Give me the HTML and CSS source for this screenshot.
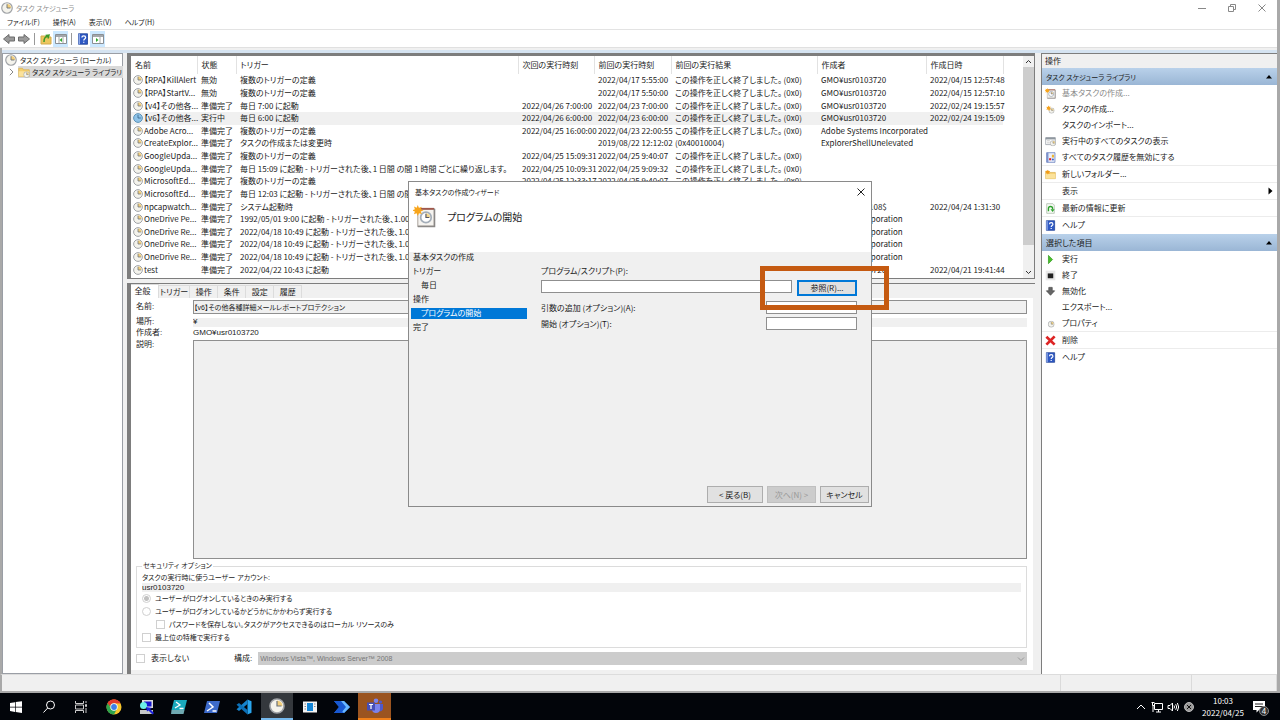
FILE: index.html
```html
<!DOCTYPE html>
<html lang="ja">

<head>
<meta charset="utf-8">
<meta name="viewport" content="width=device-width, initial-scale=1.0">
<title>タスク スケジューラ</title>
<link rel="stylesheet" href="styles.css">
</head>

<body>

<!-- shared icons -->
<svg class="sprite" aria-hidden="true">
  <symbol id="clock" viewBox="0 0 16 16">
    <circle cx="8" cy="8" r="7" fill="#f4f3ec" stroke="#9fa2a6" stroke-width="1.6"/>
    <path d="M8 8V2.500A5.500 5.500 0 0 1 13.500 8z" fill="#f3cf7c"/>
    <path d="M8 3v5h4.500" fill="none" stroke="#6a727b" stroke-width="1.200"/>
  </symbol>
  <symbol id="clock-run" viewBox="0 0 16 16">
    <circle cx="8" cy="8" r="7" fill="#8fc3e8" stroke="#5d93b8" stroke-width="1.600"/>
    <path d="M8 3v5h4.500" fill="none" stroke="#2f5c80" stroke-width="1.200"/>
  </symbol>
  <symbol id="help" viewBox="0 0 16 16">
    <path d="M2 1h12v14H2z" fill="#2f59c4" stroke="#173a8f"/>
    <path d="M2 1h2v14H2z" fill="#8ea9e8"/>
    <path d="M6.500 6c0-3 5-3 5 0 0 2-2.500 2-2.500 4M9 11.500v1.500" fill="none" stroke="#fff" stroke-width="1.700"/>
  </symbol>
  <symbol id="folder" viewBox="0 0 16 16">
    <path d="M1 3h5l1 2h8v9H1z" fill="#f5cf6c" stroke="#d9b052"/>
    <path d="M1 7h14v7H1z" fill="#fbe29b"/>
  </symbol>
  <symbol id="wizard" viewBox="0 0 24 24">
    <path d="M5 4h17v18H5z" fill="#f5f3ef" stroke="#b5aea8" stroke-width="1.200"/>
    <path d="M5 3h17v2H5z" fill="#a0584c"/>
    <path d="M22.500 4v18.500H5" fill="none" stroke="#8a8886" stroke-width="1.500"/>
    <circle cx="13.500" cy="13" r="5.500" fill="#fff" stroke="#a3adb8" stroke-width="1.800"/>
    <path d="M13.500 13V8.500A4.500 4.500 0 0 1 18 13z" fill="#f1d58d"/>
    <path d="M13.500 9v4h3.500" fill="none" stroke="#556" stroke-width="1.200"/>
    <path d="M5 0l1.200 3 3-1.300L8 4.500l3 1-3 1.200L9.300 9.500 6.200 8.500 5 11.500 3.800 8.500 1 9.700 2 6.700-1 5.500 2 4.500 1 1.600l2.800 1.200z" fill="#f8a51b"/>
  </symbol>
</svg>

<div class="window">

  <header class="titlebar">
    <svg class="ico12"><use href="#clock"/></svg>
    <h1>タスク スケジューラ</h1>
    <div class="winbtns">
      <button aria-label="最小化"><svg viewBox="0 0 8 8"><path d="M0 4.500h8"/></svg></button>
      <button aria-label="元に戻す"><svg viewBox="0 0 8 8"><path d="M.5 2.500h5v5h-5zM2.500 2.500v-2h5v5h-2"/></svg></button>
      <button aria-label="閉じる"><svg viewBox="0 0 8 8"><path d="M.5.5l7 7M7.500.5l-7 7"/></svg></button>
    </div>
  </header>

  <nav class="menubar">
    <button>ファイル(F)</button>
    <button>操作(A)</button>
    <button>表示(V)</button>
    <button>ヘルプ(H)</button>
  </nav>

  <div class="toolbar">
    <button aria-label="戻る"><svg class="ico12" viewBox="0 0 12 12"><path d="M.5 6L6 1.500V4h5.500v4H6v2.500z" fill="#9a9a9a" stroke="#6b6b6b"/></svg></button>
    <button aria-label="進む"><svg class="ico12" viewBox="0 0 12 12"><path d="M11.500 6L6 1.500V4H.5v4H6v2.500z" fill="#9a9a9a" stroke="#6b6b6b"/></svg></button>
    <span class="sep"></span>
    <button aria-label="上へ"><svg class="ico12" viewBox="0 0 12 12"><path d="M1 3h4l1 1h5v7H1z" fill="#edc75e" stroke="#d3ab4d"/><path d="M4 9c0-4 1-5 4-6M5.500 2.500L9 2.200 8 5.500" fill="none" stroke="#3c9a28" stroke-width="1.500"/></svg></button>
    <button class="on" aria-label="コンソール ツリー"><svg class="ico12" viewBox="0 0 12 12"><path d="M.5 1.500h11v9H.5z" fill="#fff" stroke="#8b8f94"/><path d="M1 2h10v2H1z" fill="#a3a8ad"/><path d="M4 4v6M8 4v6" stroke="#aaa"/><path d="M7 5v4L4.500 7z" fill="#2fa82f"/></svg></button>
    <span class="sep"></span>
    <button aria-label="ヘルプ"><svg class="ico12"><use href="#help"/></svg></button>
    <button class="on" aria-label="操作ウィンドウ"><svg class="ico12" viewBox="0 0 12 12"><path d="M.5 1.500h11v9H.5z" fill="#fff" stroke="#8b8f94"/><path d="M1 2h10v2H1z" fill="#a3a8ad"/><path d="M8 4v6" stroke="#aaa"/><path d="M4 5v4l2.500-2z" fill="#2fa82f"/></svg></button>
  </div>

  <main class="console">

    <aside class="tree">
      <div class="node root"><svg class="ico12"><use href="#clock"/></svg><span>タスク スケジューラ (ローカル)</span></div>
      <div class="node child">
        <svg class="chev" viewBox="0 0 5 8"><path d="M.8.8L4 4 .8 7.200" fill="none" stroke="#888"/></svg>
        <span class="picked"><svg class="ico12" viewBox="0 0 16 16"><use href="#folder"/><use href="#clock" x="7" y="7" width="9" height="9"/></svg>タスク スケジューラ ライブラリ</span>
      </div>
    </aside>

    <section class="center">

      <div class="list">
        <div class="tablewrap">
        <table class="tasks">
          <colgroup>
            <col class="c-name"><col class="c-state"><col class="c-trigger"><col class="c-next"><col class="c-prev"><col class="c-result"><col class="c-author"><col class="c-made">
          </colgroup>
          <thead>
            <tr><th>名前</th><th>状態</th><th>トリガー</th><th>次回の実行時刻</th><th>前回の実行時刻</th><th>前回の実行結果</th><th>作成者</th><th>作成日時</th></tr>
          </thead>
          <tbody>
            <tr><td><svg><use href="#clock"/></svg>【RPA】KillAlert</td><td>無効</td><td>複数のトリガーの定義</td><td></td><td>2022/04/17 5:55:00</td><td>この操作を正しく終了しました。 (0x0)</td><td>GMO¥usr0103720</td><td>2022/04/15 12:57:48</td></tr>
            <tr><td><svg><use href="#clock"/></svg>【RPA】StartV...</td><td>無効</td><td>複数のトリガーの定義</td><td></td><td>2022/04/17 5:50:00</td><td>この操作を正しく終了しました。 (0x0)</td><td>GMO¥usr0103720</td><td>2022/04/15 12:57:10</td></tr>
            <tr><td><svg><use href="#clock"/></svg>【v4】その他各...</td><td>準備完了</td><td>毎日 7:00 に起動</td><td>2022/04/26 7:00:00</td><td>2022/04/23 7:00:00</td><td>この操作を正しく終了しました。 (0x0)</td><td>GMO¥usr0103720</td><td>2022/02/24 19:15:57</td></tr>
            <tr class="selected"><td><svg><use href="#clock-run"/></svg>【v6】その他各...</td><td>実行中</td><td>毎日 6:00 に起動</td><td>2022/04/26 6:00:00</td><td>2022/04/23 6:00:00</td><td>この操作を正しく終了しました。 (0x0)</td><td>GMO¥usr0103720</td><td>2022/02/24 19:15:09</td></tr>
            <tr><td><svg><use href="#clock"/></svg>Adobe Acro...</td><td>準備完了</td><td>複数のトリガーの定義</td><td>2022/04/25 16:00:00</td><td>2022/04/23 22:00:55</td><td>この操作を正しく終了しました。 (0x0)</td><td>Adobe Systems Incorporated</td><td></td></tr>
            <tr><td><svg><use href="#clock"/></svg>CreateExplor...</td><td>準備完了</td><td>タスクの作成または変更時</td><td></td><td>2019/08/22 12:12:02</td><td>(0x40010004)</td><td>ExplorerShellUnelevated</td><td></td></tr>
            <tr><td><svg><use href="#clock"/></svg>GoogleUpda...</td><td>準備完了</td><td>複数のトリガーの定義</td><td>2022/04/25 15:09:31</td><td>2022/04/25 9:40:07</td><td>この操作を正しく終了しました。 (0x0)</td><td></td><td></td></tr>
            <tr><td><svg><use href="#clock"/></svg>GoogleUpda...</td><td>準備完了</td><td>毎日 15:09 に起動 - トリガーされた後、1 日間 の間 1 時間 ごとに繰り返します。</td><td>2022/04/25 10:09:31</td><td>2022/04/25 9:09:32</td><td>この操作を正しく終了しました。 (0x0)</td><td></td><td></td></tr>
            <tr><td><svg><use href="#clock"/></svg>MicrosoftEd...</td><td>準備完了</td><td>複数のトリガーの定義</td><td>2022/04/25 12:33:17</td><td>2022/04/25 9:40:07</td><td>この操作を正しく終了しました。 (0x0)</td><td></td><td></td></tr>
            <tr><td><svg><use href="#clock"/></svg>MicrosoftEd...</td><td>準備完了</td><td>毎日 12:03 に起動 - トリガーされた後、1 日間 の間 1</td><td></td><td></td><td></td><td></td><td></td></tr>
            <tr><td><svg><use href="#clock"/></svg>npcapwatch...</td><td>準備完了</td><td>システム起動時</td><td></td><td></td><td></td><td class="tail">108$</td><td>2022/04/24 1:31:30</td></tr>
            <tr><td><svg><use href="#clock"/></svg>OneDrive Pe...</td><td>準備完了</td><td>1992/05/01 9:00 に起動 - トリガーされた後、1.00:00:</td><td></td><td></td><td></td><td>Microsoft Corporation</td><td></td></tr>
            <tr><td><svg><use href="#clock"/></svg>OneDrive Re...</td><td>準備完了</td><td>2022/04/18 10:49 に起動 - トリガーされた後、1.00:00</td><td></td><td></td><td></td><td>Microsoft Corporation</td><td></td></tr>
            <tr><td><svg><use href="#clock"/></svg>OneDrive Re...</td><td>準備完了</td><td>2022/04/18 10:49 に起動 - トリガーされた後、1.00:00</td><td></td><td></td><td></td><td>Microsoft Corporation</td><td></td></tr>
            <tr><td><svg><use href="#clock"/></svg>OneDrive Re...</td><td>準備完了</td><td>2022/04/18 10:49 に起動 - トリガーされた後、1.00:00</td><td></td><td></td><td></td><td>Microsoft Corporation</td><td></td></tr>
            <tr><td><svg><use href="#clock"/></svg>test</td><td>準備完了</td><td>2022/04/22 10:43 に起動</td><td></td><td></td><td></td><td>GMO¥usr0103720</td><td>2022/04/21 19:41:44</td></tr>
          </tbody>
        </table>
        </div>
        <div class="scrollbar">
          <svg viewBox="0 0 11 11"><path d="M3 7l2.500-2.500L8 7"/></svg>
          <div class="thumb"></div>
          <svg viewBox="0 0 11 11"><path d="M3 4l2.500 2.500L8 4"/></svg>
        </div>
      </div>

      <div class="details">
        <div class="tabs" role="tablist">
          <button class="active" role="tab">全般</button><button role="tab">トリガー</button><button role="tab">操作</button><button role="tab">条件</button><button role="tab">設定</button><button role="tab">履歴</button>
        </div>
        <div class="panel">
          <div class="row r-name"><label for="name">名前:</label><input id="name" class="boxed" readonly value="【v6】その他各種詳細メールレポートプロテクション"></div>
          <div class="row r-place"><label for="place">場所:</label><input id="place" class="flat" readonly value="¥"></div>
          <div class="row r-author"><span>作成者:</span><span>GMO¥usr0103720</span></div>
          <div class="row r-desc"><label for="desc">説明:</label><textarea id="desc" class="boxed" readonly></textarea></div>
          <fieldset>
            <legend>セキュリティ オプション</legend>
            <label class="account" for="account">タスクの実行時に使うユーザー アカウント:</label>
            <input id="account" class="flat" readonly value="usr0103720">
            <label class="opt"><input type="radio" name="logon" checked disabled>ユーザーがログオンしているときのみ実行する</label>
            <label class="opt"><input type="radio" name="logon" disabled>ユーザーがログオンしているかどうかにかかわらず実行する</label>
            <label class="opt sub"><input type="checkbox" disabled>パスワードを保存しない。タスクがアクセスできるのはローカル リソースのみ</label>
            <label class="opt"><input type="checkbox" disabled>最上位の特権で実行する</label>
          </fieldset>
          <div class="bottom">
            <label class="opt"><input type="checkbox" disabled>表示しない</label>
            <label for="conf">構成:</label>
            <div class="select">
              <select id="conf" disabled><option>Windows Vista™, Windows Server™ 2008</option></select>
              <svg viewBox="0 0 8 8"><path d="M1 2.500l3 3 3-3"/></svg>
            </div>
          </div>
        </div>
      </div>

    </section>

    <aside class="actions">
      <h2>操作</h2>
      <h3>タスク スケジューラ ライブラリ<svg viewBox="0 0 8 5"><path d="M1 4.500h6L4 1z"/></svg></h3>
      <ul>
        <li><button disabled><svg><use href="#wizard"/></svg>基本タスクの作成...</button></li>
        <li><button><svg viewBox="0 0 16 16"><use href="#clock" x="5" y="5" width="9" height="9"/><path d="M5 2l1 2 2-.5L7.500 6 9 7.500 7 8 6 10 4.500 8 2 8.500 3 6 2 4l2 .2z" fill="#f5a21d"/></svg>タスクの作成...</button></li>
        <li><button><svg></svg>タスクのインポート...</button></li>
        <li><button><svg viewBox="0 0 16 16"><path d="M1 2.500h14v10H1z" fill="#fff" stroke="#8b929a"/><path d="M1 2h14v3H1z" fill="#8f979f"/><path d="M3 7h4M3 10h4" stroke="#aaa"/><use href="#clock" x="7" y="6" width="9" height="9"/></svg>実行中のすべてのタスクの表示</button></li>
        <li class="line"><button><svg viewBox="0 0 16 16"><path d="M2.500 1h12v14h-12z" fill="#e9eefb" stroke="#5670b5"/><path d="M2 1h3v14H2z" fill="#7d92cc"/><path d="M6 9h3v3H6z" fill="#d22"/><path d="M10 4h3v4h-3z" fill="#eeb52e"/><circle cx="11.500" cy="11" r="1.500" fill="#3b65c8"/></svg>すべてのタスク履歴を無効にする</button></li>
        <li class="line"><button><svg viewBox="0 0 16 16"><use href="#folder"/><path d="M4 1l1 2 2 0-1 2 1 2-2-.5L4 8 3 6 1 6l1-1.500L1 3h2z" fill="#f39b16"/></svg>新しいフォルダー...</button></li>
        <li class="line"><button><svg></svg>表示<svg class="more" viewBox="0 0 5 8"><path d="M.5.5v7L4.500 4z"/></svg></button></li>
        <li class="line"><button><svg viewBox="0 0 16 16"><path d="M2.500 1h9l2 2v12h-11z" fill="#f6faf4" stroke="#a4b3a2"/><path d="M5 12V8a3 3 0 0 1 6 0v1" fill="none" stroke="#2ea22e" stroke-width="2"/><path d="M8 9h6l-3 4z" fill="#2ea22e"/></svg>最新の情報に更新</button></li>
        <li><button><svg><use href="#help"/></svg>ヘルプ</button></li>
      </ul>
      <h3 class="second">選択した項目<svg viewBox="0 0 8 5"><path d="M1 4.500h6L4 1z"/></svg></h3>
      <ul>
        <li><button><svg viewBox="0 0 16 16"><path d="M5 2v12l6-6z" fill="#49bd2c" stroke="#2f9a1c"/></svg>実行</button></li>
        <li><button><svg viewBox="0 0 16 16"><path d="M1 1h14v14H1z" fill="#e9e9e9"/><path d="M4 5h8v7H4z" fill="#222"/></svg>終了</button></li>
        <li><button><svg viewBox="0 0 16 16"><path d="M5.500 2h5v5h3.500l-6 6.500L2 7h3.500z" fill="#666" stroke="#444"/></svg>無効化</button></li>
        <li><button><svg></svg>エクスポート...</button></li>
        <li class="line"><button><svg viewBox="0 0 16 16"><use href="#clock" x="4" y="4" width="10" height="10"/></svg>プロパティ</button></li>
        <li class="line"><button><svg viewBox="0 0 16 16"><path d="M2 2.500L14 14M14 2L2 14" stroke="#dd2525" stroke-width="4"/></svg>削除</button></li>
        <li><button><svg><use href="#help"/></svg>ヘルプ</button></li>
      </ul>
    </aside>

  </main>

  <footer class="statusbar"><span></span><span></span><span></span></footer>
</div>

<div class="dialog" role="dialog" aria-labelledby="dlgtitle">
  <div class="dlgtop">
    <div class="dlgbar">
      <span id="dlgtitle">基本タスクの作成ウィザード</span>
      <button aria-label="閉じる"><svg viewBox="0 0 8 8"><path d="M.5.5l7 7M7.500.5l-7 7"/></svg></button>
    </div>
    <div class="dlghead"><svg><use href="#wizard"/></svg><h2>プログラムの開始</h2></div>
  </div>
  <div class="dlgbody">
    <ol class="steps">
      <li>基本タスクの作成</li>
      <li>トリガー</li>
      <li class="in">毎日</li>
      <li>操作</li>
      <li class="in current">プログラムの開始</li>
      <li>完了</li>
    </ol>
    <div class="form">
      <label for="prog">プログラム/スクリプト(P):</label>
      <div class="pick"><input id="prog"><button class="btn default">参照(R)...</button></div>
      <div class="short"><label for="args">引数の追加 (オプション)(A):</label><input id="args"></div>
      <div class="short"><label for="start">開始 (オプション)(T):</label><input id="start"></div>
    </div>
  </div>
  <div class="dlgfoot">
    <button class="btn back">&lt; 戻る(B)</button>
    <button class="btn" disabled>次へ(N) &gt;</button>
    <button class="btn">キャンセル</button>
  </div>
</div>

<div class="marker"></div>

<div class="taskbar">
  <div class="apps">
    <button aria-label="スタート"><svg viewBox="0 0 16 16"><path d="M2 4l5-.8v4.500H2zM7.700 3.100L14 2.200v5.500H7.700zM2 8.400h5v4.500L2 12.100zM7.700 8.400H14V14l-6.300-.9z" fill="#fff"/></svg></button>
    <button aria-label="検索"><svg viewBox="0 0 16 16"><circle cx="9.500" cy="6" r="4" fill="none" stroke="#fff"/><path d="M6.700 9L2.500 13.500" stroke="#fff"/></svg></button>
    <button aria-label="タスク ビュー"><svg viewBox="0 0 16 16"><path d="M2.500 2v2.500h8V2M2.500 14v-2.500h8V14M2.500 6h8v4h-8zM13 2v2M13 9v5M12.500 5.500h1v2h-1z" fill="none" stroke="#ccc"/></svg></button>
    <button aria-label="Chrome"><svg viewBox="0 0 16 16"><circle cx="8" cy="8" r="7.500" fill="#f7c62c"/><path d="M8 8L1.500 4.200A7.500 7.500 0 0 1 14.500 4.200H8z" fill="#e33b2e"/><path d="M1.500 4.200A7.500 7.500 0 0 0 8 15.500L11 9.800 5 10z" fill="#2da44e"/><path d="M1.500 4.200L5 10 8 8 8 4z" fill="#2da44e"/><path d="M1.500 4.200A7.500 7.500 0 0 1 14.500 4.200H8A4 4 0 0 0 4.300 7.500z" fill="#e33b2e"/><circle cx="8" cy="8" r="3.700" fill="#fff"/><circle cx="8" cy="8" r="2.900" fill="#3f7de8"/></svg></button>
    <button aria-label="リモート"><svg viewBox="0 0 16 16"><path d="M3 1h11v8H3z" fill="#ddd"/><path d="M5 2.500h7.500v5H5z" fill="#1717cf"/><path d="M1 11h13v4H1z" fill="#c5c8c9"/><circle cx="4.500" cy="6.500" r="3.500" fill="#6cf0e8"/><path d="M7 8l6 1-2 1 4 4-1.500 1.500-4-4-1.500 1z" fill="#1d22dc"/></svg></button>
    <button aria-label="PowerShell ISE"><svg viewBox="0 0 16 16"><path d="M3 1h13l-2.500 10H.5z" fill="#19aabd"/><path d="M.5 11h13l-1 4H0z" fill="#6fa9b1"/><path d="M5 3l4 3-5 3M8.500 9.500h4" fill="none" stroke="#fff" stroke-width="1.300"/></svg></button>
    <button aria-label="PowerShell"><svg viewBox="0 0 16 16"><path d="M3 2h13l-3 12H0z" fill="#3d6bcb"/><path d="M5 4l4 4-6 4M8.500 12h4" fill="none" stroke="#fff" stroke-width="1.500"/></svg></button>
    <button aria-label="Visual Studio Code"><svg viewBox="0 0 16 16"><path d="M11.500.5L15.500 2.300v11.400L11.500 15.500z" fill="#29a5ee"/><path d="M11.500.5v4.500L3 12 .5 10.200z" fill="#1684cd"/><path d="M11.500 15.500V11L3 4 .5 5.800z" fill="#0b70b8"/></svg></button>
    <button class="open" aria-label="タスク スケジューラ"><svg><use href="#clock"/></svg></button>
    <button aria-label="アプリ"><svg viewBox="0 0 16 16"><path d="M1 2.500h14v11H1z" fill="#f3f3f3"/><path d="M5 4h6v8H5z" fill="#1485d6"/><path d="M2.500 5h1.500M2.500 7.500h1.500M2.500 10h1.500M12 5h1.500M12 7.500h1.500" stroke="#888"/></svg></button>
    <button aria-label="Power Automate"><svg viewBox="0 0 16 16"><path d="M0 2h10l6 6-6 6H0l5-6z" fill="#2266e3"/><path d="M10 2l6 6-6 6-3-3 3-3-5-6z" fill="#68b7ff"/><path d="M0 2h7l5 6-5 6H0l5-6z" fill="#1858d0"/></svg></button>
    <button class="alert" aria-label="Teams"><svg viewBox="0 0 16 16"><circle cx="9" cy="2.800" r="2.300" fill="#7b83eb"/><circle cx="13.500" cy="4" r="1.600" fill="#5059c9"/><path d="M11 6h5v5a3 3 0 0 1-4 2z" fill="#5059c9"/><path d="M5 6h8v5a4 4 0 0 1-8 0z" fill="#7b83eb"/><path d="M0 4.500h8v8H0z" fill="#464eb8"/><path d="M2 6.500h4M4 6.500v4.500" stroke="#fff" stroke-width="1.200"/></svg></button>
  </div>
  <div class="tray">
    <svg viewBox="0 0 12 12"><path d="M2 8l4-4 4 4"/></svg>
    <svg viewBox="0 0 12 12"><path d="M3.500 2.500h8v6h-8zM5 11h5M7.500 8.500V11M1.500 1v3.500h2M.5 1.500h3M2 4.500V11"/></svg>
    <svg viewBox="0 0 12 12"><path d="M1 4.500h2L5.500 2v8L3 7.500H1zM7 4.500q1 1.500 0 3M8.700 3.200q2 2.800 0 5.600M10.400 2q2.500 4 0 8"/></svg>
    <svg viewBox="0 0 12 12"><circle cx="6" cy="6" r="4.500" fill="#999" stroke="#bbb"/><path d="M4 4l4 4M8 4L4 8" stroke="#111"/></svg>
    <div class="time"><span>10:03</span><span>2022/04/25</span></div>
    <div class="notice">
      <svg viewBox="0 0 12 12"><path d="M0 0h12v9H6l-2.500 2.500V9H0z" fill="#fff" stroke="none"/><path d="M2 3h8M2 5.500h8" stroke="#222"/></svg>
      <span class="badge">4</span>
    </div>
  </div>
</div>

</body>
</html>
```
FILE: styles.css
```css
* {
  box-sizing: border-box;
}

html, body {
  height: 100%;
}

body {
  margin: 0;
  display: flex;
  flex-direction: column;
  position: relative;
  overflow: hidden;
  background: #f0f0f0;
  color: #1b1b1b;
  font-family: "Noto Sans CJK JP", sans-serif;
  font-feature-settings: "palt";
  font-size: 8px;
  line-height: 10px;
}

button, input, select, textarea {
  font: inherit;
  font-feature-settings: inherit;
  color: inherit;
  margin: 0;
  padding: 0;
  border: 0;
  background: none;
  border-radius: 0;
  outline: none;
}

button {
  white-space: nowrap;
}

h1, h2, h3, ul, ol {
  margin: 0;
  padding: 0;
  font-size: inherit;
  font-weight: normal;
  list-style: none;
}

svg {
  display: block;
  flex: none;
}

.sprite {
  position: absolute;
  width: 0;
  height: 0;
}

.ico12 {
  width: 12px;
  height: 12px;
}

/* window frame */
.window {
  flex: 1;
  min-height: 0;
  display: flex;
  flex-direction: column;
  border-right: 3px solid #a9a9a9;
  border-bottom: 2px solid #a9a9a9;
}

.titlebar {
  height: 15px;
  display: flex;
  align-items: center;
  gap: 3px;
  padding-left: 1px;
  background: #fff;
  color: #8f8f8f;
  font-size: 7px;
}

.winbtns {
  display: flex;
  margin-left: auto;
}

.winbtns button {
  width: 30px;
  display: flex;
  justify-content: center;
}

.winbtns svg, .dlgbar svg {
  width: 8px;
  height: 8px;
  fill: none;
  stroke: #888;
}

.menubar {
  height: 15px;
  display: flex;
  align-items: center;
  gap: 13px;
  padding-left: 7px;
  background: #fff;
  border-bottom: 1px solid #e3e3e3;
  font-size: 7px;
}

.toolbar {
  height: 18px;
  display: flex;
  align-items: center;
  padding-left: 1px;
  background: #fff;
  border-bottom: 1px solid #e0e0e0;
}

.toolbar button {
  width: 15px;
  height: 16px;
  display: flex;
  align-items: center;
  justify-content: center;
}

.toolbar .on {
  background: #cce8ff;
}

.toolbar .sep {
  width: 1px;
  height: 12px;
  margin: 0 3px;
  background: #999;
}

.console {
  flex: 1;
  min-height: 0;
  display: grid;
  grid-template-columns: 121px minmax(0, 1fr) 236px;
  gap: 4px;
  padding-top: 5px;
  border-left: 2px solid #a9a9a9;
  background: linear-gradient(#f0f0f0 2px, #d5e3f1 2px 5px, #f0f0f0 5px);
}

/* left tree */
.tree {
  background: #fff;
  border: 1px solid #9a9ea5;
  padding-left: 2px;
  font-size: 7px;
  white-space: nowrap;
}

.node {
  height: 12px;
  display: flex;
  align-items: center;
}

.root {
  gap: 3px;
}

.child {
  gap: 4px;
  padding-left: 4px;
}

.chev {
  width: 5px;
  height: 8px;
}

.picked {
  display: flex;
  align-items: center;
  gap: 2px;
  padding-right: 1px;
  background: #d9d9d9;
}

/* task list */
.center {
  min-width: 0;
  display: flex;
  flex-direction: column;
  margin-right: 2px;
}

.list {
  height: 226px;
  display: flex;
  border: solid #7d7d7d;
  border-width: 3px 1px 1px 4px;
  background: #fff;
}

.tablewrap {
  flex: 1;
  min-width: 0;
  overflow: hidden;
  padding-bottom: 2px;
}

.tasks {
  table-layout: fixed;
  width: 872px;
  height: 100%;
  border-collapse: collapse;
}

.c-name { width: 66px; }
.c-state { width: 39px; }
.c-trigger { width: 282px; }
.c-next { width: 76px; }
.c-prev { width: 77px; }
.c-result { width: 146px; }
.c-author { width: 109px; }
.c-made { width: 77px; }

.tasks th, .tasks td {
  padding: 0 0 0 4px;
  font-weight: normal;
  text-align: left;
  white-space: nowrap;
  line-height: 10px;
}

.tasks th {
  height: 18px;
  border-right: 1px solid #e2e2e2;
}

.tasks td:first-child {
  padding-left: 2px;
}

.tasks td svg {
  display: inline-block;
  width: 10px;
  height: 10px;
  margin-right: 1px;
  vertical-align: top;
}

.tasks .tail {
  padding-left: 52px;
}

.tasks .selected {
  background: #f0f0f0;
}

.scrollbar {
  width: 11px;
  display: flex;
  flex-direction: column;
  background: #f0f0f0;
}

.scrollbar svg {
  width: 11px;
  height: 11px;
  fill: none;
  stroke: #333;
}

.scrollbar .thumb {
  flex: 0 1 178px;
  margin-bottom: auto;
  background: #cdcdcd;
}

/* details */
.details {
  flex: 1;
  min-height: 0;
  display: flex;
  flex-direction: column;
  margin-top: 4px;
  border-top: 1px solid #7d7d7d;
  border-left: 4px solid #7d7d7d;
  font-family: "Liberation Sans", "Noto Sans CJK JP", sans-serif;
}

.tabs {
  height: 14px;
  display: flex;
  align-items: flex-end;
}

.tabs button {
  min-width: 28px;
  height: 13px;
  padding: 0 1px;
  border: 1px solid #dcdcdc;
  border-width: 1px 1px 0 0;
  line-height: 11px;
}

.tabs .active {
  height: 14px;
  padding-right: 5px;
  background: #fff;
}

.panel {
  flex: 1;
  min-height: 0;
  display: flex;
  flex-direction: column;
  padding: 2px 6px 5px 5px;
  margin: 0 2px 4px 0;
  background: #fff;
}

.row {
  display: grid;
  grid-template-columns: 57px minmax(0, 1fr);
  align-items: center;
}

.r-name { height: 14px; }

.r-place {
  height: 9px;
  margin-top: 3px;
}

.r-author { height: 14px; }

.r-desc {
  flex: 1;
  min-height: 0;
  align-items: stretch;
}

.boxed {
  width: 100%;
  border: 1px solid #8f8f8f;
  background: #f0f0f0;
  font-size: 7px;
  resize: none;
}

input.boxed {
  height: 14px;
}

.flat {
  display: block;
  width: 100%;
  height: 9px;
  background: #f0f0f0;
}

fieldset {
  margin: 2px 0 0;
  padding: 2px 5px 3px;
  border: 1px solid #dcdcdc;
  min-width: 0;
  font-size: 7px;
}

legend {
  height: 10px;
  padding: 0 1px;
}

.account {
  display: block;
}

fieldset .flat {
  font-size: 8px;
}

.opt {
  display: flex;
  align-items: center;
  gap: 4px;
  height: 13px;
}

.opt.sub {
  padding-left: 14px;
}

.opt input {
  appearance: none;
  width: 9px;
  height: 9px;
  border: 1px solid #d0d0d0;
  background: #fff;
}

.opt input[type=radio] {
  border-radius: 50%;
}

.opt input:checked {
  background: radial-gradient(#c0c0c0 0 2px, #fff 3px);
}

.bottom {
  display: flex;
  align-items: center;
  margin-top: 4px;
}

.bottom .opt {
  width: 98px;
  gap: 6px;
}

.select {
  flex: 1;
  position: relative;
  margin-left: 6px;
}

.select select {
  display: block;
  appearance: none;
  width: 100%;
  height: 13px;
  padding-left: 2px;
  background: #ccc;
  color: #777;
  font-size: 7px;
  opacity: 1;
}

.select svg {
  position: absolute;
  top: 3px;
  right: 2px;
  width: 8px;
  height: 8px;
  fill: none;
  stroke: #999;
}

/* actions pane */
.actions {
  background: #fff;
  border-top: 1px solid #7d7d7d;
  border-left: 1px solid #7d7d7d;
}

.actions h2 {
  height: 14px;
  padding-left: 3px;
  line-height: 14px;
  background: #f0f0f0;
}

.actions h3 {
  height: 17px;
  display: flex;
  align-items: center;
  justify-content: space-between;
  padding: 0 4px;
  background: linear-gradient(#b9d1ea, #9ab6d5);
}

.actions h3 svg {
  width: 8px;
  height: 5px;
}

.actions h3:not(.second) {
  font-size: 7px;
}

.actions .second {
  margin-top: 1px;
}

.actions li button {
  width: 100%;
  height: 16px;
  display: flex;
  align-items: center;
  gap: 6px;
  padding: 0 4px 0 3px;
}

.actions li svg {
  width: 11px;
  height: 11px;
}

.actions li .more {
  width: 5px;
  height: 8px;
  margin-left: auto;
}

.actions li button:disabled {
  color: #8a8a8a;
}

.actions .line {
  border-bottom: 1px solid #ececec;
}

.statusbar {
  height: 17px;
  display: grid;
  grid-template-columns: minmax(0, 1fr) 131px 85px;
  border-top: 1px solid #dcdcdc;
  border-left: 2px solid #a9a9a9;
}

.statusbar span {
  border-right: 1px solid #dadada;
}

/* wizard, floats over the console */
.dialog {
  position: absolute;
  left: 408px;
  top: 181px;
  width: 464px;
  height: 326px;
  display: flex;
  flex-direction: column;
  border: 1px solid #8a8a8a;
  background: #f0f0f0;
}

.dlgtop {
  height: 70px;
  background: #fff;
}

.dlgbar {
  height: 19px;
  display: flex;
  align-items: center;
  justify-content: space-between;
  padding: 0 6px;
}

.dlgbar span {
  font-size: 7px;
}

.dlgbar svg {
  stroke: #222;
}

.dlghead {
  display: flex;
  align-items: center;
  gap: 11px;
  padding: 4px 4px 0;
}

.dlghead svg {
  width: 23px;
  height: 23px;
}

.dlghead h2 {
  font-size: 10px;
}

.dlgbody {
  flex: 1;
  display: flex;
}

.steps {
  width: 118px;
  padding-left: 2px;
}

.steps li {
  height: 14px;
  padding: 0 2px;
  line-height: 10px;
}

.steps .in {
  padding-left: 10px;
}

.steps .current {
  height: 11px;
  margin-bottom: 3px;
  background: #0078d7;
  color: #fff;
}

.form {
  width: 316px;
  margin-left: 14px;
  padding-top: 14px;
}

.form input {
  height: 13px;
  border: 1px solid #8f8f8f;
  background: #fff;
  min-width: 0;
}

.form > label {
  display: block;
}

.pick {
  display: flex;
  gap: 5px;
  margin: 4px 0 5px;
}

.pick input {
  flex: 1;
}

.pick .btn {
  width: 60px;
  height: 16px;
}

.short {
  display: flex;
  align-items: center;
  justify-content: space-between;
  margin-bottom: 3px;
}

.short input {
  width: 91px;
}

.btn {
  min-width: 49px;
  height: 17px;
  border: 1px solid #adadad;
  background: #e1e1e1;
}

.btn.back {
  min-width: 56px;
}

.btn.default {
  border: 1px solid #0078d7;
  outline: 1px solid #0078d7;
  outline-offset: -2px;
}

.btn:disabled {
  background: #ccc;
  border-color: #bfbfbf;
  color: #989898;
}

.dlgfoot {
  display: flex;
  justify-content: flex-end;
  gap: 4px;
  padding: 0 2px 3px;
}

.marker {
  position: absolute;
  left: 760px;
  top: 266px;
  width: 129px;
  height: 44px;
  border: 5px solid #c55a11;
}

/* taskbar */
.taskbar {
  height: 27px;
  display: flex;
  justify-content: space-between;
  background: #02050a;
  color: #fff;
}

.apps {
  width: 391px;
  display: grid;
  grid-template-columns: repeat(12, 1fr);
}

.apps button {
  display: flex;
  align-items: center;
  justify-content: center;
}

.apps svg {
  width: 16px;
  height: 16px;
}

.apps .open {
  background: #34383d;
  border-bottom: 2px solid #76b9ed;
}

.apps .alert {
  background: #9a5420;
  border-bottom: 2px solid #f08019;
}

.tray {
  display: flex;
  align-items: center;
  gap: 4px;
  padding-right: 11px;
}

.tray svg {
  width: 12px;
  height: 12px;
  fill: none;
  stroke: #fff;
}

.time {
  width: 44px;
  display: flex;
  flex-direction: column;
  align-items: center;
  margin-left: 2px;
  line-height: 12px;
}

.notice {
  position: relative;
  margin-left: 4px;
  padding-right: 4px;
}

.badge {
  position: absolute;
  right: 0;
  top: 5px;
  width: 10px;
  height: 10px;
  border-radius: 50%;
  border: 1px solid #888;
  background: #333;
  line-height: 8px;
  text-align: center;
}
```
